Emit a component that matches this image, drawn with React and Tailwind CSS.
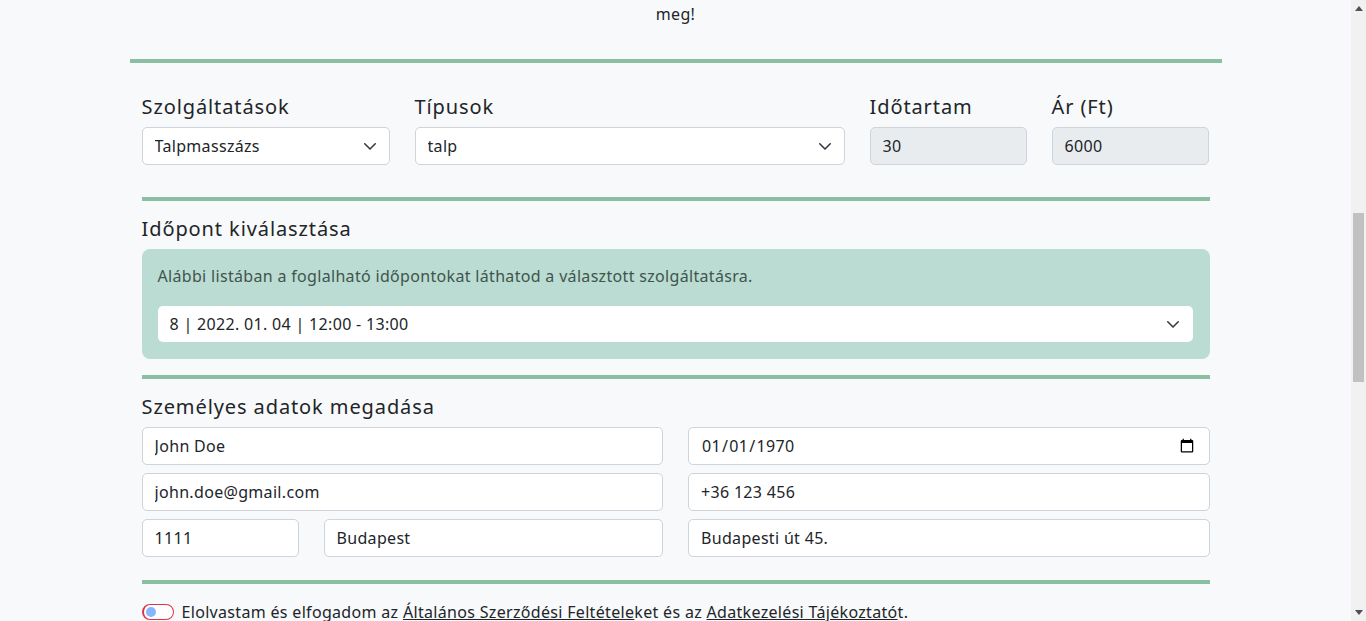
import React from "react";

const font = { fontFamily: '"Noto Sans", "DejaVu Sans", sans-serif' };

const Chevron = () => (
  <svg className="w-[14px] h-[14px] text-[#343a40]" viewBox="0 0 16 16" fill="none">
    <path d="M2 5.5l6 6 6-6" stroke="currentColor" strokeWidth="1.8" strokeLinecap="round" strokeLinejoin="round" />
  </svg>
);

const Select = ({ value, className = "", bordered = true }) => (
  <div className={`relative ${className}`}>
    <select
      defaultValue={value}
      className={`appearance-none w-full bg-white rounded-[5px] px-3 text-base tracking-[0.02em] text-[#212529] outline-none ${
        bordered ? "h-[38px] border border-[#ced4da]" : "h-9 border-0"
      }`}
    >
      <option>{value}</option>
    </select>
    <span className="absolute right-[13px] top-1/2 -translate-y-1/2 pointer-events-none">
      <Chevron />
    </span>
  </div>
);

const Input = ({ value, className = "", disabled = false, type = "text" }) => (
  <input
    type={type}
    defaultValue={value}
    readOnly={disabled}
    className={`h-[38px] w-full border border-[#ced4da] rounded-[5px] px-3 text-base tracking-[0.02em] text-[#212529] outline-none ${
      disabled ? "bg-[#e9ecef]" : "bg-white"
    } ${className}`}
  />
);

const Divider = () => <div className="h-1 bg-[#8bbfa3]" />;

const Label = ({ children }) => (
  <label className="block text-xl leading-6 mb-2 tracking-[0.045em]">{children}</label>
);

export default function App() {
  return (
    <div className="h-screen flex bg-[#f8f9fa] text-[#212529] overflow-hidden" style={font}>
      <div className="flex-1">
        <p className="text-center text-base leading-6 pt-[2px] tracking-[0.02em]">meg!</p>
        <div className="w-[1092px] mx-auto mt-[33px]">
          <Divider />
          <div className="px-3">
            <div className="flex gap-[25px] pt-8">
              <div className="w-[248px]">
                <Label>Szolgáltatások</Label>
                <Select value="Talpmasszázs" />
              </div>
              <div className="w-[430px]">
                <Label>Típusok</Label>
                <Select value="talp" />
              </div>
              <div className="w-[157px]">
                <Label>Időtartam</Label>
                <Input value="30" disabled />
              </div>
              <div className="w-[157px]">
                <Label>Ár (Ft)</Label>
                <Input value="6000" disabled />
              </div>
            </div>

            <div className="mt-8">
              <Divider />
            </div>
            <h3 className="text-xl leading-6 mt-4 tracking-[0.045em]">Időpont kiválasztása</h3>
            <div className="mt-2 bg-[#badcd2] rounded-lg pl-4 pr-[17px] pt-[15px] pb-[17px]">
              <p className="text-base leading-6 text-[#41544d] tracking-[0.02em]">
                Alábbi listában a foglalható időpontokat láthatod a választott szolgáltatásra.
              </p>
              <Select value="8 | 2022. 01. 04 | 12:00 - 13:00" bordered={false} className="mt-[18px]" />
            </div>

            <div className="mt-4">
              <Divider />
            </div>
            <h3 className="text-xl leading-6 mt-4 tracking-[0.045em]">Személyes adatok megadása</h3>
            <div className="mt-2 grid grid-cols-2 gap-x-[25px] gap-y-2">
              <Input value="John Doe" />
              <Input value="1970-01-01" type="date" />
              <Input value="john.doe@gmail.com" />
              <Input value="+36 123 456" />
              <div className="flex gap-[25px]">
                <Input value="1111" className="!w-[157px] shrink-0" />
                <Input value="Budapest" />
              </div>
              <Input value="Budapesti út 45." />
            </div>

            <div className="mt-[23px]">
              <Divider />
            </div>
            <div className="flex items-center gap-2 mt-4">
              <span className="w-8 h-4 rounded-full border border-[#dc3545] border-l-2 bg-white flex items-center px-[2px]">
                <span className="w-[10px] h-[10px] rounded-full bg-[#86b7fe]" />
              </span>
              <span className="text-base leading-6 tracking-[0.02em]">
                Elolvastam és elfogadom az{" "}
                <a className="underline">Általános Szerződési Feltétele</a>ket és az{" "}
                <a className="underline">Adatkezelési Tájékoztató</a>t.
              </span>
            </div>
          </div>
        </div>
      </div>
      <div className="w-[15px] bg-[#f1f1f1] flex flex-col items-center">
        <div className="h-[17px] flex items-center justify-center">
          <svg width="8" height="5" viewBox="0 0 8 5"><path d="M0 5L4 0l4 5z" fill="#505050" /></svg>
        </div>
        <div className="flex-1 w-full px-[2px]">
          <div className="mt-[196px] h-[169px] bg-[#c1c1c1]" />
        </div>
        <div className="h-[17px] flex items-center justify-center">
          <svg width="8" height="5" viewBox="0 0 8 5"><path d="M0 0l4 5 4-5z" fill="#505050" /></svg>
        </div>
      </div>
    </div>
  );
}
